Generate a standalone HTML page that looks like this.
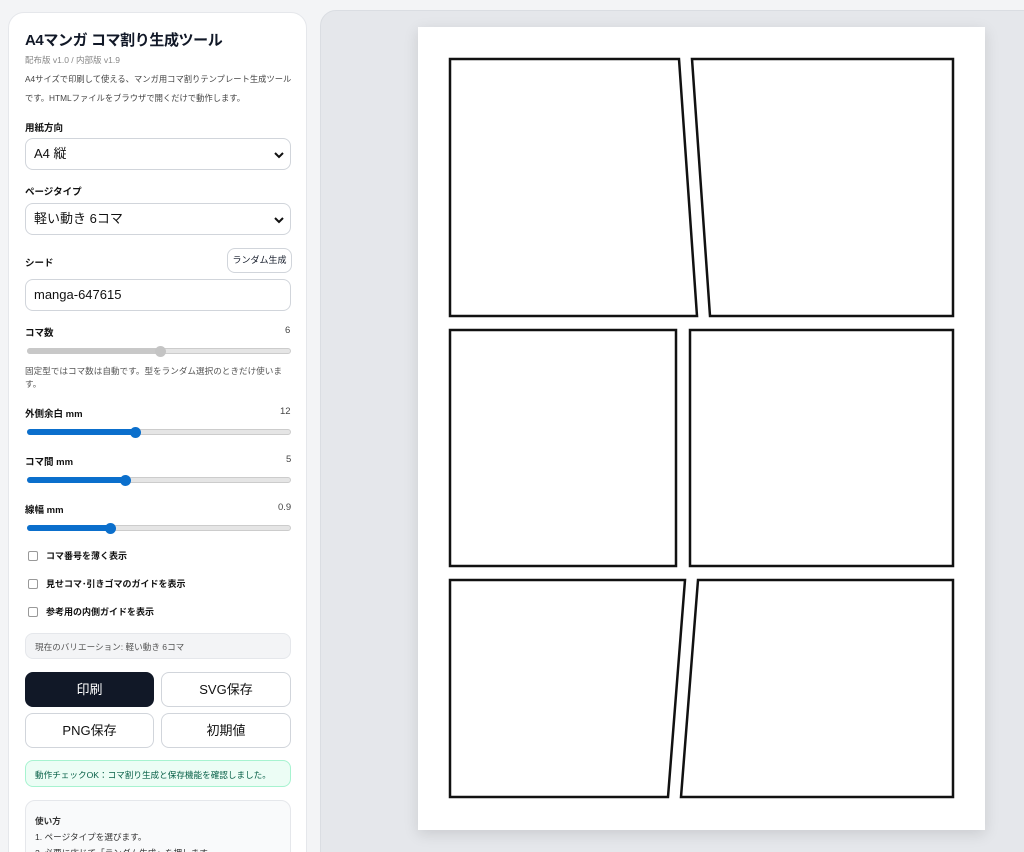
<!DOCTYPE html>
<html><head><meta charset="utf-8"><style>
*{box-sizing:border-box;margin:0;padding:0}
html,body{width:1024px;height:852px;overflow:hidden}
body{background:#f3f4f6;font-family:"Liberation Sans","Noto Sans CJK JP",sans-serif;color:#111827;position:relative}
.side{position:absolute;left:8px;top:12px;width:299px;height:860px;background:#fff;border-radius:16px;border:1px solid #e5e7eb}
.a{position:absolute;white-space:nowrap}
.lbl{font-size:10px;font-weight:bold;color:#111}
.val{font-size:10px;color:#444}
.sel{position:absolute;left:25px;width:266px;height:32px;border:1px solid #d1d5db;border-radius:8px;background:#fff;font-size:13px;line-height:30px;padding-left:8px;color:#111}
.sel svg{position:absolute;right:6px;top:12px}
.track{position:absolute;left:27px;width:264px;height:6px;border-radius:3px;background:#e5e5e5;border:1px solid #ccc;overflow:visible}
.fill{position:absolute;left:-1px;top:-1px;height:6px;border-radius:3px;background:#0b6fcc}
.thumb{position:absolute;width:11px;height:11px;border-radius:50%;background:#0b6fcc;top:-3.5px}
.cb{position:absolute;left:28px;width:10px;height:10px;border:1px solid #999;border-radius:2px;background:#fff}
.btn{position:absolute;height:35px;border-radius:8px;border:1px solid #d1d5db;background:#fff;font-size:13px;text-align:center;line-height:33px;color:#111}
.main{position:absolute;left:320px;top:10px;width:720px;height:860px;background:#e5e7eb;border-radius:16px;border:1px solid #dadde2}
.paper{position:absolute;left:418px;top:27px;width:567px;height:803px;background:#fff;box-shadow:0 4px 14px rgba(0,0,0,.12)}
</style></head><body>
<div class="side"></div>
<div class="a" style="left:25px;top:29px;font-size:15px;font-weight:bold;letter-spacing:-0.4px">A4マンガ コマ割り生成ツール</div>
<div class="a" style="left:25px;top:54px;font-size:8.5px;color:#888">配布版 v1.0 / 内部版 v1.9</div>
<div class="a" style="left:25px;top:70px;font-size:8.3px;color:#444;line-height:19px">A4サイズで印刷して使える、マンガ用コマ割りテンプレート生成ツール<br>です。HTMLファイルをブラウザで開くだけで動作します。</div>
<div class="a lbl" style="left:25px;top:120px;font-size:9.5px">用紙方向</div>
<div class="sel" style="top:138px">A4 縦<svg width="10" height="8" viewBox="0 0 10 8"><path d="M1 2l4 4 4-4" fill="none" stroke="#111" stroke-width="2"/></svg></div>
<div class="a lbl" style="left:25px;top:184px;font-size:9.5px">ページタイプ</div>
<div class="sel" style="top:203px">軽い動き 6コマ<svg width="10" height="8" viewBox="0 0 10 8"><path d="M1 2l4 4 4-4" fill="none" stroke="#111" stroke-width="2"/></svg></div>
<div class="a lbl" style="left:25px;top:255px;font-size:9.5px">シード</div>
<div class="a" style="left:227px;top:248px;width:65px;height:25px;border:1px solid #d1d5db;border-radius:8px;font-size:9px;text-align:center;line-height:23px">ランダム生成</div>
<div class="sel" style="top:279px;height:32px">manga-647615</div>
<div class="a lbl" style="left:25px;top:325px;font-size:9.5px">コマ数</div><div class="a val" style="left:285px;top:325px;font-size:9.5px">6</div>
<div class="track" style="top:348px"><div class="fill" style="width:133px;background:#c8c8c8"></div><div class="thumb" style="left:127px;background:#c4c4c4"></div></div>
<div class="a" style="left:25px;top:365px;font-size:8.6px;color:#555;line-height:13px">固定型ではコマ数は自動です。型をランダム選択のときだけ使いま<br>す。</div>
<div class="a lbl" style="left:25px;top:406px;font-size:9.5px">外側余白 mm</div><div class="a val" style="left:280px;top:406px;font-size:9.5px">12</div>
<div class="track" style="top:429px"><div class="fill" style="width:108px"></div><div class="thumb" style="left:102px"></div></div>
<div class="a lbl" style="left:25px;top:454px;font-size:9.5px">コマ間 mm</div><div class="a val" style="left:286px;top:454px;font-size:9.5px">5</div>
<div class="track" style="top:477px"><div class="fill" style="width:98px"></div><div class="thumb" style="left:92px"></div></div>
<div class="a lbl" style="left:25px;top:502px;font-size:9.5px">線幅 mm</div><div class="a val" style="left:278px;top:502px;font-size:9.5px">0.9</div>
<div class="track" style="top:525px"><div class="fill" style="width:83px"></div><div class="thumb" style="left:77px"></div></div>
<div class="cb" style="top:551px"></div><div class="a lbl" style="left:46px;top:549px;font-size:9px">コマ番号を薄く表示</div>
<div class="cb" style="top:579px"></div><div class="a lbl" style="left:46px;top:577px;font-size:9px">見せコマ･引きゴマのガイドを表示</div>
<div class="cb" style="top:607px"></div><div class="a lbl" style="left:46px;top:605px;font-size:9px">参考用の内側ガイドを表示</div>
<div class="a" style="left:25px;top:633px;width:266px;height:26px;background:#f3f4f6;border:1px solid #e5e7eb;border-radius:8px;font-size:8.6px;color:#555;padding:7px 0 0 9px">現在のバリエーション: 軽い動き 6コマ</div>
<div class="btn" style="left:25px;top:672px;width:129px;background:#111827;color:#fff;border-color:#111827">印刷</div>
<div class="btn" style="left:161px;top:672px;width:130px">SVG保存</div>
<div class="btn" style="left:25px;top:713px;width:129px">PNG保存</div>
<div class="btn" style="left:161px;top:713px;width:130px">初期値</div>
<div class="a" style="left:25px;top:760px;width:266px;height:27px;background:#ecfdf5;border:1px solid #a7f3d0;border-radius:8px;font-size:8.6px;color:#065f46;padding:8px 0 0 9px">動作チェックOK：コマ割り生成と保存機能を確認しました。</div>
<div class="a" style="left:25px;top:800px;width:266px;height:80px;background:#f9fafb;border:1px solid #e5e7eb;border-radius:10px;font-size:8.6px;color:#333;padding:12px 0 0 9px;line-height:16px"><b>使い方</b><br>1. ページタイプを選びます。<br>2. 必要に応じて「ランダム生成」を押します。</div>
<div class="main"></div>
<div class="paper"></div>
<svg class="a" style="left:0;top:0" width="1024" height="852"><g fill="#fff" stroke="#111" stroke-width="2.5" stroke-linejoin="miter">
<path d="M450 59H679L697 316H450Z"/><path d="M692 59H953V316H710Z"/>
<path d="M450 330H676V566H450Z"/><path d="M690 330H953V566H690Z"/>
<path d="M450 580H685L668 797H450Z"/><path d="M698 580H953V797H681Z"/></g></svg>
</body></html>
